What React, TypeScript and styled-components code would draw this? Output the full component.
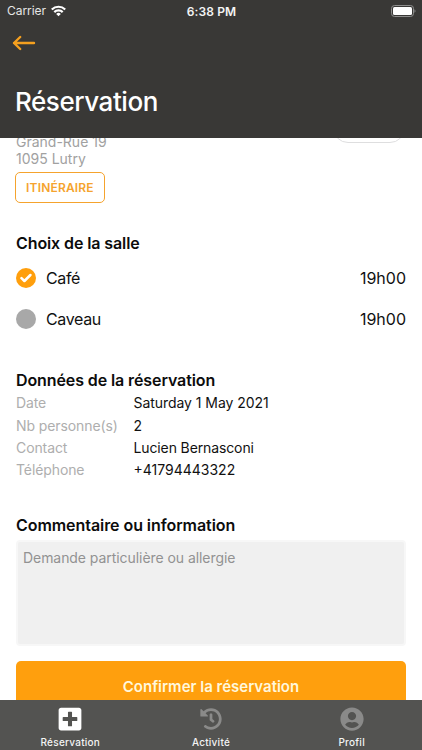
import React from "react";
import styled, { createGlobalStyle } from "styled-components";
import { FaHistory, FaPlusSquare, FaUserCircle } from "react-icons/fa";

const GlobalStyle = createGlobalStyle`
  *, *::before, *::after { box-sizing: border-box; }
  body {
    margin: 0;
    background: #fff;
    font-family: Inter, "Liberation Sans", sans-serif;
    color: #111;
  }
`;

const Screen = styled.div`
  width: 422px;
  height: 750px;
  display: flex;
  flex-direction: column;
  overflow: hidden;
  background: #fff;
`;

const Header = styled.header`
  flex: none;
  height: 138px;
  background: #393836;
  color: #fff;
`;

const StatusBar = styled.div`
  display: grid;
  grid-template-columns: 1fr auto 1fr;
  align-items: center;
  height: 22px;
  padding: 0 6px 0 7px;
`;

const Carrier = styled.div`
  display: flex;
  align-items: center;
  gap: 5px;
  padding-bottom: 1px;
  font-size: 12px;
  letter-spacing: -0.05px;
  color: #e6e6e5;
`;

const Clock = styled.div`
  font-size: 12px;
  font-weight: 600;
  letter-spacing: 0.15px;
  color: #f4f4f4;
`;

const BatterySlot = styled.div`
  display: flex;
  justify-content: flex-end;
  padding-bottom: 1px;
`;

const BackButton = styled.button`
  display: flex;
  margin: 13px 0 0 12px;
  padding: 0;
  border: 0;
  background: none;
`;

const PageTitle = styled.h1`
  margin: 34px 0 0 15px;
  font-size: 26px;
  line-height: 34px;
  font-weight: 500;
  letter-spacing: -0.45px;
`;

const Content = styled.main`
  flex: 1;
  min-height: 0;
  overflow: hidden;
  padding: 0 16px;
`;

const Venue = styled.section`
  display: flex;
  justify-content: space-between;
  margin-top: -5px;
`;

const Address = styled.address`
  font-style: normal;
  font-size: 14px;
  line-height: 17px;
  color: #a1a1a1;
`;

const PillOutline = styled.div`
  width: 72px;
  height: 30px;
  margin: -20px 1px 0 0;
  border: 1px solid #dededf;
  border-radius: 15px;
`;

const RouteButton = styled.button`
  display: flex;
  align-items: center;
  justify-content: center;
  width: 90px;
  height: 31px;
  margin: 5px 0 0 -0.6px;
  padding: 0 1px 0 0;
  border: 1px solid #f5a32d;
  border-radius: 5px;
  background: #fff;
  color: #f5a32d;
  font: 600 12px Inter, sans-serif;
  letter-spacing: 0.18px;
`;

const SectionTitle = styled.h2<{ $top: number; $tracking: number }>`
  margin: ${(p) => p.$top}px 0 0;
  font-size: 16px;
  line-height: 20px;
  font-weight: 600;
  letter-spacing: ${(p) => p.$tracking}px;
  color: #0c0c0c;
`;

const RoomList = styled.div`
  display: flex;
  flex-direction: column;
  padding-top: 5px;
`;

const RoomRow = styled.div`
  display: flex;
  align-items: center;
  height: 40.5px;
  font-size: 16px;
  letter-spacing: -0.35px;
`;

const Radio = styled.span<{ $checked: boolean }>`
  display: flex;
  align-items: center;
  justify-content: center;
  width: 20px;
  height: 20px;
  margin-right: 10px;
  border-radius: 50%;
  background: ${(p) => (p.$checked ? "#ff9f0d" : "#a8a8a8")};
`;

const RoomTime = styled.span`
  margin-left: auto;
  letter-spacing: 0;
`;

const Details = styled.dl`
  display: grid;
  grid-template-columns: 117.5px 1fr;
  grid-auto-rows: 22.4px;
  align-items: center;
  margin: 1.6px 0 0;
  font-size: 14px;
`;

const Label = styled.dt`
  letter-spacing: -0.1px;
  color: #aeaeae;
`;

const Value = styled.dd<{ $tracking: number }>`
  margin: 0;
  letter-spacing: ${(p) => p.$tracking}px;
`;

const Comment = styled.textarea`
  display: block;
  width: 100%;
  height: 106px;
  margin: 5px 0 0;
  padding: 6.5px 5px;
  border: 2px solid #f7f7f7;
  border-radius: 4px;
  background: #f0f0f0;
  resize: none;
  outline: 0;
  font: 14px/20px Inter, sans-serif;
  letter-spacing: -0.06px;
  &::placeholder { color: #929292; opacity: 1; }
`;

const ConfirmButton = styled.button`
  display: block;
  width: 100%;
  height: 52px;
  margin-top: 15px;
  padding: 0;
  border: 0;
  border-radius: 5px;
  background: #ff9f0d;
  color: #fff7dc;
  font: 600 15px Inter, sans-serif;
`;

const TabBar = styled.nav`
  flex: none;
  display: grid;
  grid-template-columns: repeat(3, 1fr);
  height: 50px;
  background: #535351;
`;

const Tab = styled.div<{ $active?: boolean }>`
  display: flex;
  flex-direction: column;
  align-items: center;
  color: ${(p) => (p.$active ? "#fff" : "#8a8a89")};
`;

const TabIcon = styled.div`
  display: flex;
  align-items: center;
  height: 24px;
  margin-top: 7px;
`;

const TabLabel = styled.span`
  margin-top: 4px;
  font-size: 10px;
  line-height: 14px;
  font-weight: 500;
  letter-spacing: 0.25px;
  color: #f4f4f4;
`;

const rooms = [
  { name: "Café", time: "19h00", checked: true },
  { name: "Caveau", time: "19h00", checked: false },
];

const details = [
  { label: "Date", value: "Saturday 1 May 2021", tracking: -0.05 },
  { label: "Nb personne(s)", value: "2", tracking: 0 },
  { label: "Contact", value: "Lucien Bernasconi", tracking: -0.12 },
  { label: "Téléphone", value: "+41794443322", tracking: 0 },
];

function WifiIcon() {
  return (
    <svg width="15" height="12" viewBox="0 0 15 12" fill="none" stroke="#fff" strokeWidth="2.2">
      <path d="M.8 4.5a9.5 9.5 0 0 1 13.4 0" />
      <path d="M3.3 7.1a6 6 0 0 1 8.4 0" />
      <path d="M7.5 11.2 5.2 8.9a3.3 3.3 0 0 1 4.6 0Z" fill="#fff" stroke="none" />
    </svg>
  );
}

function BatteryIcon() {
  return (
    <svg width="25" height="12" viewBox="0 0 25 12">
      <rect x=".5" y=".5" width="22" height="11" rx="3" fill="none" stroke="#8e8e8d" />
      <rect x="2" y="2" width="19" height="8" rx="1.5" fill="#fff" />
      <path d="M23.5 4.2c1.3.6 1.3 3 0 3.6Z" fill="#8e8e8d" />
    </svg>
  );
}

function BackArrow() {
  return (
    <svg width="24" height="16" viewBox="0 0 24 16" fill="none" stroke="#f5a01f" strokeWidth="2.4" strokeLinecap="round" strokeLinejoin="round">
      <path d="M22 8H2M8.2 2 2 8l6.2 6" />
    </svg>
  );
}

function Check() {
  return (
    <svg width="12" height="10" viewBox="0 0 12 10" fill="none" stroke="#fff" strokeWidth="2.5" strokeLinecap="round" strokeLinejoin="round">
      <path d="M1.5 5.2 4.4 8l6-6" />
    </svg>
  );
}

export default function App() {
  return (
    <Screen>
      <GlobalStyle />
      <Header>
        <StatusBar>
          <Carrier>
            Carrier
            <WifiIcon />
          </Carrier>
          <Clock>6:38 PM</Clock>
          <BatterySlot>
            <BatteryIcon />
          </BatterySlot>
        </StatusBar>
        <BackButton aria-label="Retour">
          <BackArrow />
        </BackButton>
        <PageTitle>Réservation</PageTitle>
      </Header>
      <Content>
        <Venue>
          <Address>
            Grand-Rue 19
            <br />
            1095 Lutry
          </Address>
          <PillOutline />
        </Venue>
        <RouteButton>ITINÉRAIRE</RouteButton>

        <SectionTitle $top={30} $tracking={-0.1}>Choix de la salle</SectionTitle>
        <RoomList>
          {rooms.map((r) => (
            <RoomRow key={r.name}>
              <Radio $checked={r.checked}>{r.checked && <Check />}</Radio>
              {r.name}
              <RoomTime>{r.time}</RoomTime>
            </RoomRow>
          ))}
        </RoomList>

        <SectionTitle $top={31} $tracking={-0.1}>Données de la réservation</SectionTitle>
        <Details>
          {details.map((d) => (
            <React.Fragment key={d.label}>
              <Label>{d.label}</Label>
              <Value $tracking={d.tracking}>{d.value}</Value>
            </React.Fragment>
          ))}
        </Details>

        <SectionTitle $top={33.5} $tracking={-0.06}>Commentaire ou information</SectionTitle>
        <Comment placeholder="Demande particulière ou allergie" />
        <ConfirmButton>Confirmer la réservation</ConfirmButton>
      </Content>
      <TabBar>
        <Tab $active>
          <TabIcon><FaPlusSquare size={26} /></TabIcon>
          <TabLabel>Réservation</TabLabel>
        </Tab>
        <Tab>
          <TabIcon><FaHistory size={22} /></TabIcon>
          <TabLabel>Activité</TabLabel>
        </Tab>
        <Tab>
          <TabIcon><FaUserCircle size={24} /></TabIcon>
          <TabLabel>Profil</TabLabel>
        </Tab>
      </TabBar>
    </Screen>
  );
}
